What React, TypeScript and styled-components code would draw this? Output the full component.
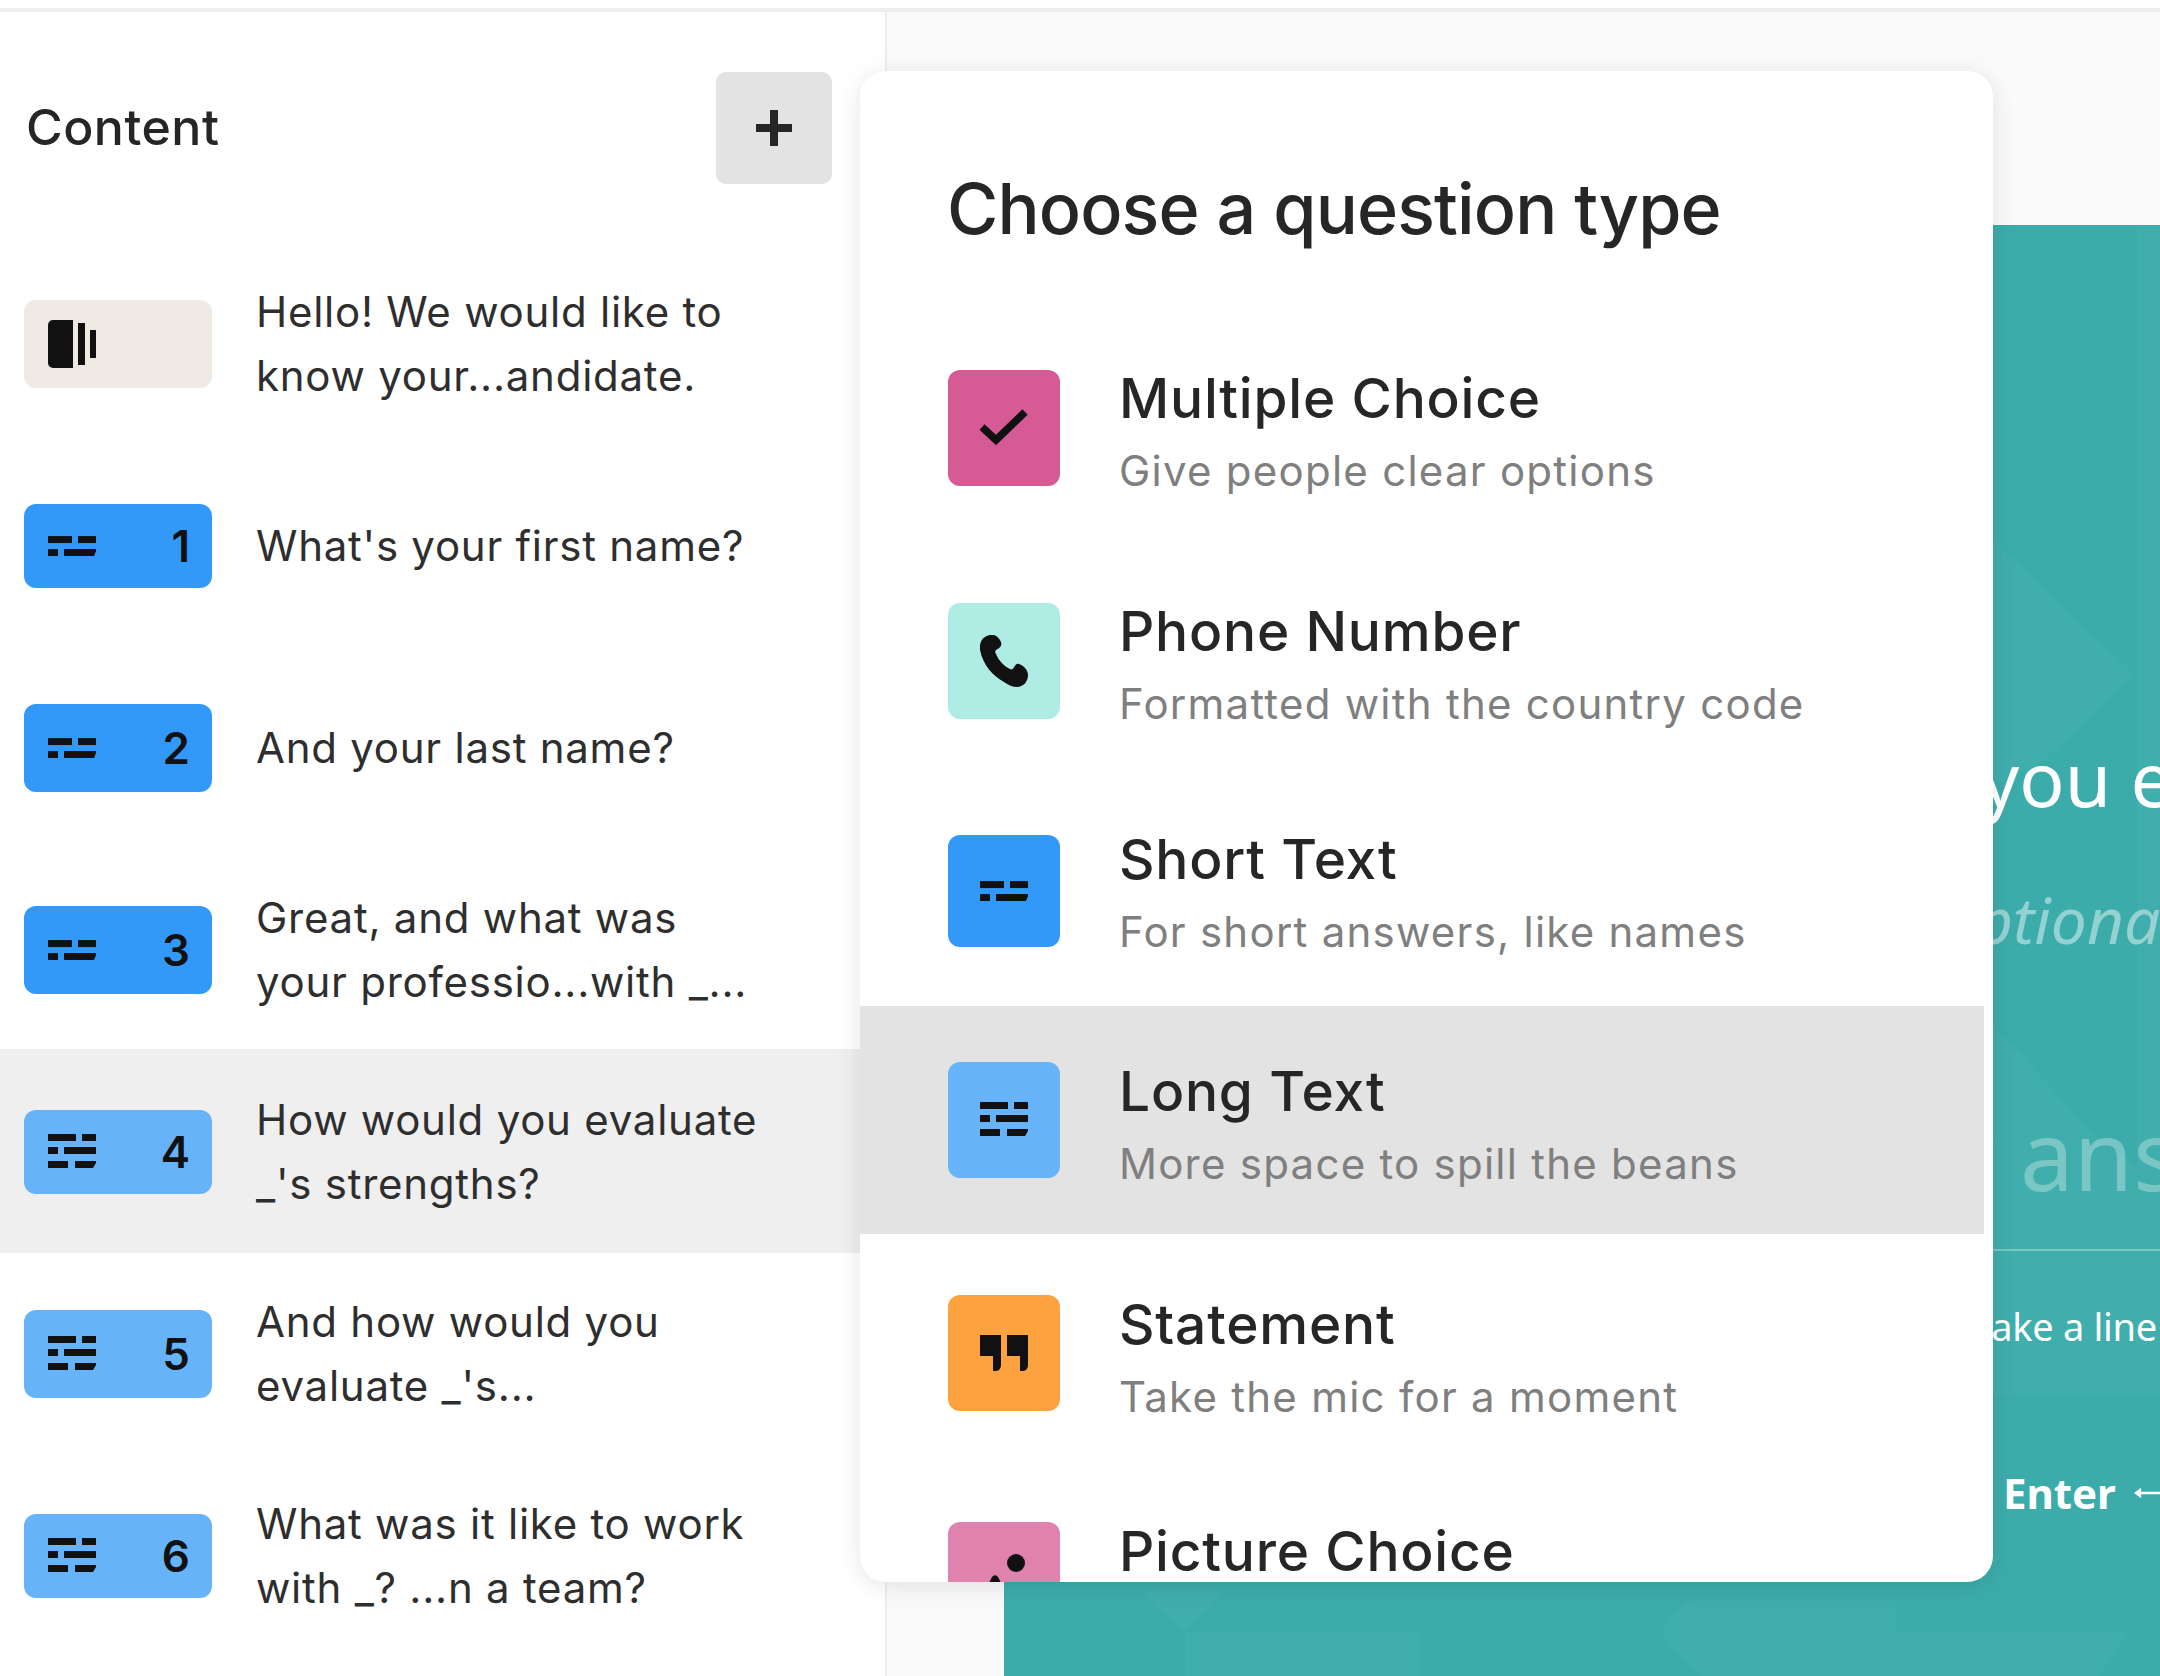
import React from 'react';
import styled, { createGlobalStyle } from 'styled-components';

const GlobalStyle = createGlobalStyle`
  html, body {
    margin: 0;
    padding: 0;
    background: #fff;
  }
  body {
    font-family: Inter, "Liberation Sans", sans-serif;
    color: #262627;
    overflow: hidden;
  }
`;

const Page = styled.div`
  position: relative;
  width: 2160px;
  height: 1676px;
  overflow: hidden;
  display: flex;
  flex-direction: column;
`;

const TopBar = styled.div`
  height: 8px;
  flex: none;
  background: #fff;
  border-bottom: 4px solid #eeeeee;
`;

const Body = styled.div`
  flex: 1;
  min-height: 0;
  display: flex;
`;

const Sidebar = styled.aside`
  width: 885px;
  flex: none;
  background: #fff;
  border-right: 2px solid #eeeeee;
`;

const SidebarHead = styled.div`
  height: 231px;
  box-sizing: border-box;
  padding: 60px 53px 0 26px;
  display: flex;
  justify-content: space-between;
  align-items: flex-start;
`;

const SidebarTitle = styled.h2`
  margin: 26px 0 0;
  font-size: 50px;
  line-height: 58px;
  font-weight: 450;
  letter-spacing: 0.5px;
`;

const AddButton = styled.button`
  width: 116px;
  height: 112px;
  border: 0;
  padding: 0;
  border-radius: 10px;
  background: #e3e3e3;
  display: flex;
  align-items: center;
  justify-content: center;
`;

const QuestionRow = styled.div<{ $active?: boolean }>`
  height: ${p => (p.$active ? 204 : 202)}px;
  margin-top: ${p => (p.$active ? -2 : 0)}px;
  box-sizing: border-box;
  padding: ${p => (p.$active ? 2 : 0)}px 0 0 24px;
  display: flex;
  align-items: center;
  gap: 44px;
  background: ${p => (p.$active ? '#efefef' : 'transparent')};
`;

const Badge = styled.div<{ $color: string; $tall?: boolean }>`
  width: 188px;
  height: ${p => (p.$tall ? 88 : 84)}px;
  flex: none;
  box-sizing: border-box;
  padding: 0 22px 0 24px;
  border-radius: 12px;
  background: ${p => p.$color};
  display: flex;
  align-items: center;
  justify-content: space-between;
  color: #111;
`;

const BadgeNumber = styled.span`
  font-size: 44px;
  font-weight: 600;
  line-height: 1;
`;

const QuestionText = styled.p`
  margin: 0;
  width: 560px;
  font-size: 42px;
  line-height: 64.5px;
  letter-spacing: 0.75px;
  color: #2e2e2f;
`;

const Main = styled.main`
  flex: 1;
  min-width: 0;
  background: #fafafa;
  padding: 213px 0 0 117px;
`;

const Canvas = styled.div`
  position: relative;
  height: 100%;
  box-sizing: border-box;
  background: #3cacab;
  overflow: hidden;
  font-family: "Noto Sans", "Open Sans", sans-serif;
  color: #fff;
`;

const Pattern = styled.svg`
  position: absolute;
  inset: 0;
  width: 100%;
  height: 100%;
`;

const CanvasBody = styled.div`
  position: relative;
  white-space: nowrap;
  padding: 508px 0 0 0;
`;

const Heading = styled.div`
  font-size: 75px;
  line-height: 90px;
  padding-left: 977px;
`;

const Optional = styled.div`
  font-size: 64px;
  line-height: 90px;
  font-style: italic;
  opacity: 0.45;
  margin-top: 52px;
  padding-left: 936px;
`;

const AnswerInput = styled.div`
  margin-top: 134px;
  padding: 0 0 40px 785px;
  font-size: 96px;
  line-height: 110px;
  color: rgba(255, 255, 255, 0.3);
  border-bottom: 2px solid rgba(255, 255, 255, 0.3);
`;

const Hint = styled.div`
  margin-top: 52px;
  font-size: 38px;
  line-height: 46px;
  letter-spacing: -0.3px;
  padding-left: 952px;
`;

const EnterHint = styled.div`
  margin-top: 119px;
  font-size: 42px;
  line-height: 50px;
  font-weight: 700;
  padding-left: 999px;
  display: flex;
  align-items: center;
  gap: 18px;
`;

const Modal = styled.div`
  position: absolute;
  left: 860px;
  top: 71px;
  width: 1133px;
  height: 1511px;
  background: #fff;
  border-radius: 26px;
  box-shadow: 0 4px 24px rgba(0, 0, 0, 0.1);
  overflow: hidden;
`;

const ModalTitle = styled.h1`
  margin: 0;
  height: 243px;
  box-sizing: border-box;
  padding: 96px 0 0 87px;
  font-size: 70px;
  line-height: 84px;
  font-weight: 500;
  letter-spacing: -0.85px;
`;

const TypeRow = styled.div<{ $height: number; $pad: number; $active?: boolean }>`
  width: 1124px;
  height: ${p => p.$height}px;
  box-sizing: border-box;
  padding: ${p => p.$pad}px 0 0 88px;
  display: flex;
  align-items: flex-start;
  gap: 60px;
  background: ${p => (p.$active ? '#e3e3e3' : 'transparent')};
`;

const TypeIcon = styled.div<{ $color: string; $height: number }>`
  width: 112px;
  height: ${p => p.$height}px;
  flex: none;
  border-radius: 12px;
  background: ${p => p.$color};
  display: flex;
  align-items: center;
  justify-content: center;
  overflow: hidden;
`;

const TypeCopy = styled.div<{ $lift?: number }>`
  margin-top: ${p => -(p.$lift ?? 0)}px;
  margin-left: -1px;
`;

const TypeName = styled.div`
  font-size: 55px;
  line-height: 64px;
  margin-top: -3px;
  font-weight: 450;
  letter-spacing: 0.8px;
`;

const TypeDesc = styled.div`
  font-size: 42px;
  line-height: 50px;
  color: #7f7f7f;
  margin-top: 16px;
  letter-spacing: 1.25px;
`;

const SlideIcon = () => (
  <svg width="48" height="48" viewBox="0 0 48 48" fill="#111">
    <path d="M5 0h20v48H5a5 5 0 0 1-5-5V5a5 5 0 0 1 5-5z" />
    <rect x="30" y="3" width="7" height="42" />
    <rect x="42" y="10" width="6" height="28" />
  </svg>
);

// three rows of dashes, the short text icon leaves out the last one
const LinesIcon = ({ long, size = 48 }: { long?: boolean; size?: number }) => (
  <svg width={size} height={long ? size * 0.75 : size * 0.42} viewBox={long ? '0 0 48 36' : '0 0 48 20'} fill="#111">
    <rect x="0" y="0" width={long ? 28 : 24} height="7" />
    <rect x={long ? 34 : 30} y="0" width={long ? 14 : 18} height="7" />
    <rect x="0" y="13" width="10" height="7" />
    <path d={long ? 'M16 13h32v7H16z' : 'M16 13h32v2l-2 5H16z'} />
    {long && (
      <>
        <rect x="0" y="27" width="20" height="7" />
        <path d="M27 27h21v2l-3 5H27z" />
      </>
    )}
  </svg>
);

const CheckIcon = () => (
  <svg width="48" height="38" viewBox="0 0 48 38" fill="none" stroke="#111" strokeWidth="7.5">
    <path d="M2 18l14 13L45 3" />
  </svg>
);

const PhoneIcon = () => (
  <svg width="48" height="52" viewBox="0 0 48 52" fill="#111">
    <path d="M10 0c5-1 9 2 11 7 1 3 0 5-5 8-1 1-1 2 0 4 3 7 8 12 14 15 2 1 3 0 4-2 2-3 3-4 5-3 5 2 9 6 9 11 0 7-5 12-11 12-4 0-9-2-13-5C13 41 3 30 0 15-1 7 3 1 10 0z" />
  </svg>
);

const QuoteIcon = () => (
  <svg width="48" height="36" viewBox="0 0 48 36" fill="#111">
    <path d="M0 0h21v30c0 3-2 6-5 6h-3V21H0z" />
    <path d="M27 0h21v30c0 3-2 6-5 6h-3V21H27z" />
  </svg>
);

const PictureIcon = () => (
  <svg width="60" height="60" viewBox="0 0 60 60" fill="#111">
    <circle cx="42" cy="13" r="9" />
    <path d="M2 58L17 29c2-5 6-5 8 0l15 29z" />
  </svg>
);

const EnterArrow = () => (
  <svg width="44" height="22" viewBox="0 0 44 22" fill="#fff">
    <path d="M0 11l12-9v7h32v4H12v7z" />
  </svg>
);

const questions = [
  { color: '#efebe4', tall: true, text: ['Hello! We would like to', 'know your...andidate.'], slide: true },
  { color: '#3399f9', number: 1, text: ["What's your first name?"] },
  { color: '#3399f9', number: 2, tall: true, text: ['And your last name?'] },
  { color: '#3399f9', number: 3, tall: true, text: ['Great, and what was', 'your professio...with _...'] },
  { color: '#66b3fa', number: 4, long: true, active: true, text: ['How would you evaluate', "_'s strengths?"] },
  { color: '#66b3fa', number: 5, long: true, tall: true, text: ['And how would you', "evaluate _'s..."] },
  { color: '#66b3fa', number: 6, long: true, text: ['What was it like to work', 'with _? ...n a team?'] },
];

const types = [
  { name: 'Multiple Choice', desc: 'Give people clear options', color: '#d65b94', rowH: 233, pad: 56, iconH: 116, lift: 1, icon: <CheckIcon /> },
  { name: 'Phone Number', desc: 'Formatted with the country code', color: '#aeece4', rowH: 232, pad: 56, iconH: 116, lift: 1, icon: <PhoneIcon /> },
  { name: 'Short Text', desc: 'For short answers, like names', color: '#3399f9', rowH: 227, pad: 56, iconH: 112, lift: 5, icon: <LinesIcon /> },
  { name: 'Long Text', desc: 'More space to spill the beans', color: '#66b3fa', rowH: 228, pad: 56, iconH: 116, active: true, icon: <LinesIcon long /> },
  { name: 'Statement', desc: 'Take the mic for a moment', color: '#fda23f', rowH: 232, pad: 61, iconH: 116, icon: <QuoteIcon /> },
  { name: 'Picture Choice', desc: '', color: '#df82ae', rowH: 232, pad: 56, iconH: 116, icon: <PictureIcon /> },
];

const App: React.FC = () => (
  <Page>
    <GlobalStyle />
    <TopBar />
    <Body>
      <Sidebar>
        <SidebarHead>
          <SidebarTitle>Content</SidebarTitle>
          <AddButton aria-label="Add question">
            <svg width="36" height="36" viewBox="0 0 36 36" fill="none" stroke="#262627" strokeWidth="8">
              <path d="M0 18h36M18 0v36" />
            </svg>
          </AddButton>
        </SidebarHead>
        {questions.map((q, i) => (
          <QuestionRow key={i} $active={q.active}>
            <Badge $color={q.color} $tall={q.tall}>
              {q.slide ? <SlideIcon /> : <LinesIcon long={q.long} />}
              {q.number && <BadgeNumber>{q.number}</BadgeNumber>}
            </Badge>
            <QuestionText>
              {q.text.map((line, j) => (
                <React.Fragment key={j}>
                  {line}
                  {j < q.text.length - 1 && <br />}
                </React.Fragment>
              ))}
            </QuestionText>
          </QuestionRow>
        ))}
      </Sidebar>
      <Main>
        <Canvas>
          <Pattern viewBox="0 0 1156 1451" preserveAspectRatio="none" fill="#40aead">
            <polygon points="1133,0 1156,0 1156,1170 1133,1170" />
            <polygon points="989,315 1131,450 1040,535 989,560" />
            <polygon points="989,800 1096,915 1133,942 1133,1170 989,1170" />
            <polygon points="136,1365 179,1407 221,1365" />
            <polygon points="181,1407 416,1407 416,1451 181,1451" />
            <polygon points="656,1407 685,1375 892,1375 892,1451 696,1451" />
            <polygon points="892,1407 1125,1407 1095,1451 892,1451" />
          </Pattern>
          <CanvasBody>
            <Heading>you evaluate</Heading>
            <Optional>optional</Optional>
            <AnswerInput>your answer here</AnswerInput>
            <Hint>make a line</Hint>
            <EnterHint>
              Enter
              <EnterArrow />
            </EnterHint>
          </CanvasBody>
        </Canvas>
      </Main>
    </Body>
    <Modal>
      <ModalTitle>Choose a question type</ModalTitle>
      {types.map(t => (
        <TypeRow key={t.name} $height={t.rowH} $pad={t.pad} $active={t.active}>
          <TypeIcon $color={t.color} $height={t.iconH}>{t.icon}</TypeIcon>
          <TypeCopy $lift={t.lift}>
            <TypeName>{t.name}</TypeName>
            <TypeDesc>{t.desc}</TypeDesc>
          </TypeCopy>
        </TypeRow>
      ))}
    </Modal>
  </Page>
);

export default App;
